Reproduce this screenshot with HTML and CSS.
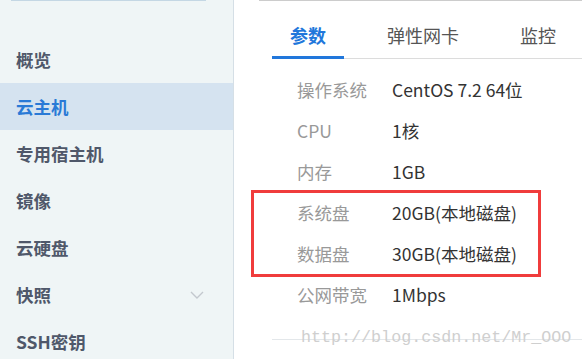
FILE: index.html
```html
<!DOCTYPE html>
<html lang="zh-CN">
<head>
  <meta charset="UTF-8" />
  <title>云主机详情</title>
  <link rel="stylesheet" href="styles.css">
</head>
<body>
  <div class="page">
    <div class="sidebar">
      <div class="side-top"></div>
      <ul class="menu">
        <li>概览</li>
        <li class="active">云主机</li>
        <li>专用宿主机</li>
        <li>镜像</li>
        <li>云硬盘</li>
        <li>快照
          <svg class="chevron" width="14" height="8" viewBox="0 0 14 8"><path d="M1 1 L7 7 L13 1" fill="none" stroke="#c3c8ce" stroke-width="1.4"/></svg>
        </li>
        <li>SSH密钥</li>
      </ul>
    </div>

    <div class="main">
      <div class="main-top"></div>
      <div class="tabs">
        <div class="tab active">参数</div>
        <div class="tab">弹性网卡</div>
        <div class="tab">监控</div>
      </div>

      <div class="params">
        <div class="row"><span class="label">操作系统</span><span class="value">CentOS 7.2 64位</span></div>
        <div class="row"><span class="label">CPU</span><span class="value">1核</span></div>
        <div class="row"><span class="label">内存</span><span class="value">1GB</span></div>
        <div class="row"><span class="label">系统盘</span><span class="value">20GB(本地磁盘)</span></div>
        <div class="row"><span class="label">数据盘</span><span class="value">30GB(本地磁盘)</span></div>
        <div class="row"><span class="label">公网带宽</span><span class="value">1Mbps</span></div>
      </div>

      <div class="highlight"></div>
      <div class="watermark-line"></div>
      <div class="watermark">http://blog.csdn.net/Mr_OOO</div>
    </div>
  </div>
</body>
</html>
```
FILE: styles.css
```css
body {
  margin: 0;
  font-family: "Noto Sans CJK SC", sans-serif;
  background: #fff;
}

.page {
  display: flex;
  height: 359px;
  overflow: hidden;
}

.sidebar {
  width: 233px;
  background: #eff5f6;
  border-right: 1px solid #d5dfe6;
  flex-shrink: 0;
}

.side-top {
  height: 1px;
  margin: 0 27px 0 11px;
  background: #c4d7e4;
}

.menu {
  list-style: none;
  margin: 0;
  padding: 35px 0 0;
}

.menu li {
  position: relative;
  height: 47px;
  line-height: 47px;
  padding-left: 16px;
  font-size: 17.5px;
  font-weight: bold;
  color: #4f586a;
}

.menu li.active {
  background: #d5e3f0;
  color: #2a7ad6;
}

.chevron {
  position: absolute;
  left: 190px;
  top: 20px;
}

.main {
  position: relative;
  flex: 1;
}

.main-top {
  height: 1px;
  margin-left: 25px;
  background: #cccccc;
}

.tabs {
  display: flex;
  gap: 25px;
  margin-left: 38px;
  height: 57px;
  border-bottom: 1px solid #dcdcdc;
}

.tab {
  padding: 22px 18px 9px;
  line-height: 24px;
  font-size: 18px;
  color: #555;
  border-bottom: 3px solid transparent;
  margin-bottom: -1px;
}

.tab.active {
  color: #2177db;
  font-weight: bold;
  border-bottom-color: #2177db;
}

.params {
  padding: 10px 0 0 63px;
}

.row {
  display: flex;
  height: 41px;
  line-height: 41px;
  font-size: 17.5px;
}

.label {
  width: 95px;
  color: #999;
}

.value {
  color: #333;
}

.highlight {
  position: absolute;
  left: 17px;
  top: 190px;
  width: 284px;
  height: 81px;
  border: 3px solid #f03c3c;
}

.watermark-line {
  position: absolute;
  left: 38px;
  right: 0;
  top: 339px;
  height: 1px;
  background: #e3e7ea;
}

.watermark {
  position: absolute;
  left: 67px;
  top: 328px;
  font-family: "Liberation Mono", monospace;
  font-size: 16.7px;
  line-height: 20px;
  color: #cfcfcf;
}
```
